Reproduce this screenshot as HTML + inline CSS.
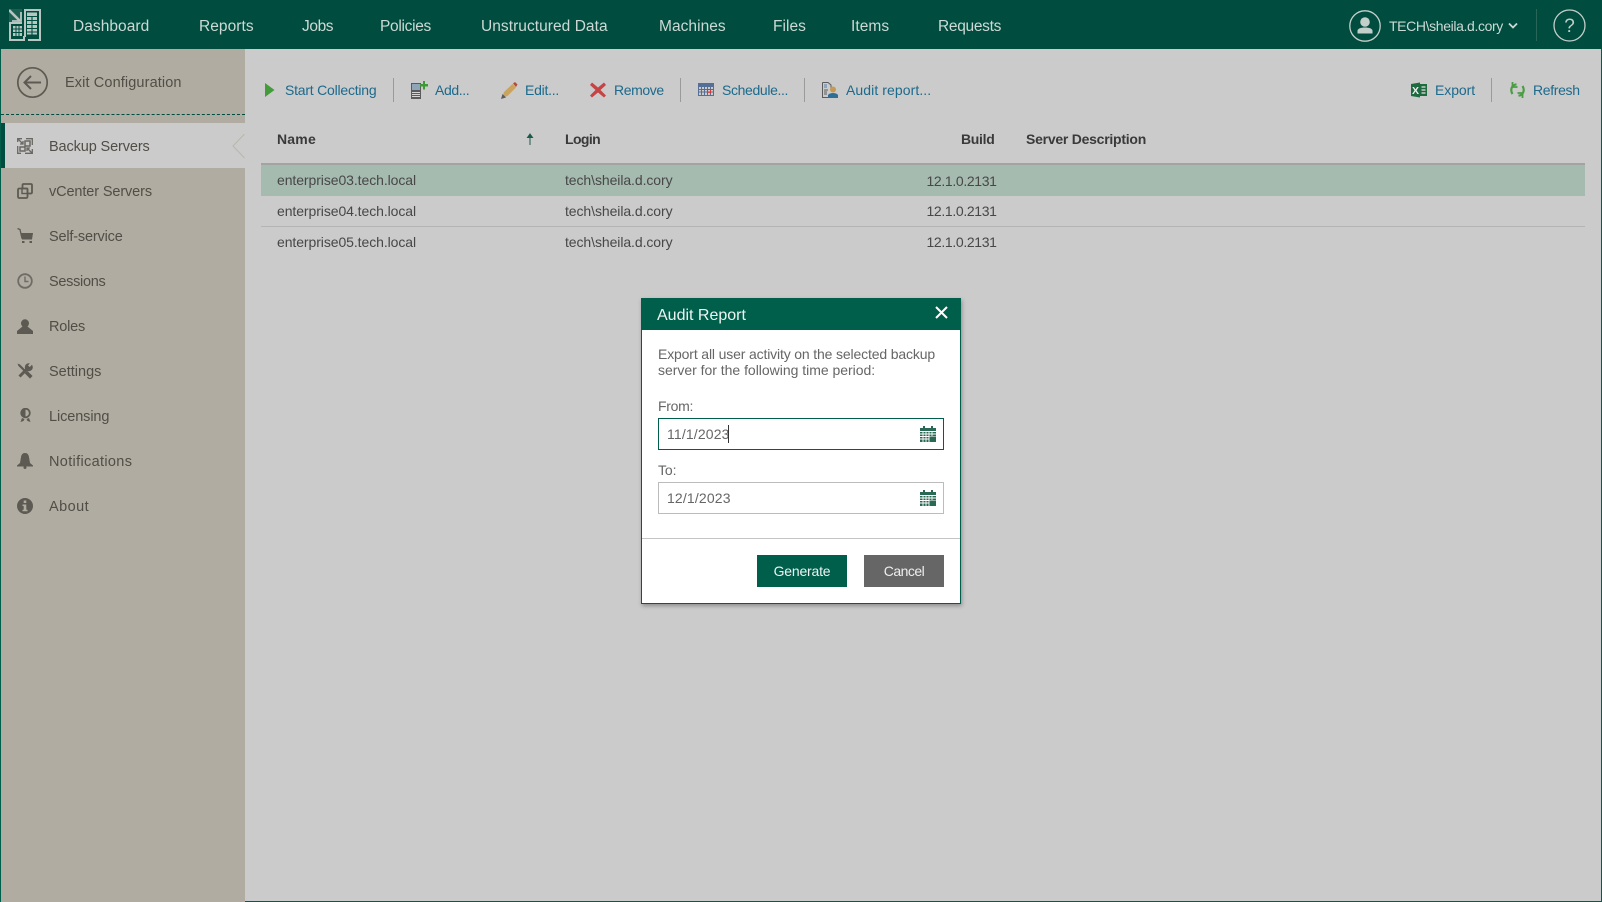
<!DOCTYPE html>
<html><head><meta charset="utf-8"><style>
html,body{margin:0;padding:0}
body{width:1602px;height:902px;position:relative;overflow:hidden;background:#cbcbcb;font-family:"Liberation Sans",sans-serif;font-size:14px;color:#444}
div,span,svg{position:absolute}
.t{white-space:nowrap;line-height:18px;height:18px}
.n{color:#ccd9d5;font-size:15.5px;top:18px;letter-spacing:.05px}
.s{color:#514e47;left:49px;font-size:14.5px;letter-spacing:-.15px}
.b{color:#1c6a8c;top:81px;font-size:14px;letter-spacing:-.3px}
.h{font-weight:bold;color:#3a3a3a;top:130px;font-size:14px;letter-spacing:-.25px}
.c{color:#474747;font-size:14px;letter-spacing:-.08px}
.r{letter-spacing:-.35px}
.v{width:1px;height:24px;top:78px;background:#9a9a9a}
.d{color:#666;font-size:14px;letter-spacing:-.15px}
</style></head><body>
<div style="left:0;top:0;width:1602px;height:49px;background:#004c3e"></div>
<div style="left:0;top:49px;width:1px;height:853px;background:#005f4b"></div>
<div style="left:0;top:901px;width:1602px;height:1px;background:#005f4b"></div>
<div style="left:1601px;top:49px;width:1px;height:853px;background:#005f4b"></div>

<svg style="left:9px;top:9px" width="32" height="32" viewBox="0 0 32 32">
<rect x="0" y="0" width="13" height="13" fill="#1d5f50"/><path d="M0 1L11 12" stroke="#b8c6c1" stroke-width="2.600" fill="none"/><path d="M12 3V12H3" stroke="#b8c6c1" stroke-width="1.800" fill="none"/><rect x="0" y="13" width="13" height="2" fill="#b8c6c1"/>
<path d="M1 15V31H15V27" stroke="#b8c6c1" stroke-width="2" fill="none"/>
<rect x="4" y="17" width="9" height="10" fill="#b8c6c1"/><path d="M4 20H13M4 23.500H13M7 17V27M10 17V27" stroke="#004c3e" stroke-width="1"/>
<path d="M16 28V1H31V31H19" stroke="#b8c6c1" stroke-width="2" fill="none"/>
<rect x="18" y="3.500" width="10" height="22" fill="#b8c6c1"/><path d="M18 7.500H28M18 11.500H28M18 15.500H28M18 19.500H28M18 23H28M23 7V25.500" stroke="#004c3e" stroke-width="1.100"/>
</svg>

<span class="t n" style="left:73px">Dashboard</span>
<span class="t n" style="left:199px">Reports</span>
<span class="t n" style="left:302px;letter-spacing:-.4px">Jobs</span>
<span class="t n" style="left:380px;letter-spacing:-.3px">Policies</span>
<span class="t n" style="left:481px">Unstructured Data</span>
<span class="t n" style="left:659px">Machines</span>
<span class="t n" style="left:773px">Files</span>
<span class="t n" style="left:851px">Items</span>
<span class="t n" style="left:938px;letter-spacing:-.3px">Requests</span>

<svg style="left:1349px;top:10px" width="32" height="32" viewBox="0 0 32 32"><circle cx="16" cy="16" r="15.2" fill="none" stroke="#c3cfcb" stroke-width="1.3"/><circle cx="16" cy="12" r="4.8" fill="#c3cfcb"/><path d="M8.5 23.5V20.5C9 18.5 12 17.5 16 17.5S23 18.5 23.5 20.5V23.5Z" fill="#c3cfcb"/></svg>
<span class="t" style="left:1389px;top:17px;color:#ccd9d5;font-size:14px;letter-spacing:-.37px">TECH\sheila.d.cory</span>
<svg style="left:1508px;top:22px" width="10" height="8" viewBox="0 0 10 8"><path d="M1 1.500L5 5.500L9 1.500" fill="none" stroke="#ccd9d5" stroke-width="1.800"/></svg>
<div style="left:1536px;top:9px;width:1px;height:32px;background:#2a6657"></div>
<svg style="left:1553px;top:9px" width="33" height="33" viewBox="0 0 33 33"><circle cx="16.500" cy="16.500" r="15.500" fill="none" stroke="#c3cfcb" stroke-width="1.300"/><text x="16.500" y="23" text-anchor="middle" font-family="Liberation Sans" font-size="19" fill="#c3cfcb">?</text></svg>

<div style="left:1px;top:49px;width:244px;height:853px;background:#b0aca1"></div>
<div style="left:1px;top:114px;width:244px;height:0;border-top:1px dashed #004c3e"></div>
<svg style="left:16px;top:66px" width="33" height="33" viewBox="0 0 33 33"><circle cx="16.500" cy="16.500" r="14.700" fill="none" stroke="#5d5a53" stroke-width="1.700"/><path d="M25 16.500H9M15 10L8.500 16.500L15 23" fill="none" stroke="#5d5a53" stroke-width="2"/></svg>
<span class="t s" style="left:65px;top:74px;letter-spacing:.12px">Exit Configuration</span>

<div style="left:1px;top:123px;width:4px;height:45px;background:#004c3e"></div>
<div style="left:5px;top:123px;width:240px;height:45px;background:#cbcbcb"></div>
<svg style="left:232px;top:134px" width="13" height="24" viewBox="0 0 13 24"><path d="M12.500 0L1 12L12.500 24" fill="none" stroke="#b9b6ac" stroke-width="1"/></svg>

<svg style="left:17px;top:138px" width="16" height="16" viewBox="0 0 16 16" fill="none" stroke="#6a6862" stroke-width="1.300"><path d="M5 .7H.7V4M.7 8V15.300H4M8 15.300H15.300V11M15.300 7V.7H9"/><path d="M1 1L6 6M3 6H6V3M10 10L15 15M10 13V10H13" stroke-width="1.300"/><rect x="8" y="3" width="5" height="5" stroke-width="1.500"/><rect x="3" y="9" width="5" height="4" stroke-width="1.500"/></svg>
<span class="t s" style="top:138px;letter-spacing:-.12px">Backup Servers</span>

<svg style="left:17px;top:183px" width="16" height="16" viewBox="0 0 16 16" fill="none" stroke="#5d5a53" stroke-width="1.800"><path d="M5.500 5V2.200C5.500 1.400 6 1 6.700 1H13.800C14.600 1 15 1.400 15 2.200V9.300C15 10 14.600 10.500 13.800 10.500H11"/><rect x="1" y="5.500" width="9.500" height="9.500" rx="1.200"/><rect x="5" y="5.500" width="5.500" height="5" stroke-width="1.400"/></svg>
<span class="t s" style="top:183px;letter-spacing:-.12px">vCenter Servers</span>

<svg style="left:17px;top:228px" width="16" height="16" viewBox="0 0 16 16"><path d="M.5 .5L3 1.500L5 10.500" fill="none" stroke="#5d5a53" stroke-width="1.300"/><path d="M3.800 5H16L15 11.500H5Z" fill="#5d5a53"/><rect x="5" y="13" width="2.500" height="2" fill="#5d5a53"/><rect x="12.500" y="13" width="2.500" height="2" fill="#5d5a53"/></svg>
<span class="t s" style="top:228px;letter-spacing:-.18px">Self-service</span>

<svg style="left:17px;top:273px" width="16" height="16" viewBox="0 0 16 16" fill="none" stroke="#6f6c65"><circle cx="8" cy="8" r="6.800" stroke-width="1.800"/><path d="M8 3.500V8.500H11.500" stroke-width="1.400"/></svg>
<span class="t s" style="top:273px;letter-spacing:-.3px">Sessions</span>

<svg style="left:17px;top:319px" width="16" height="16" viewBox="0 0 16 16" fill="#5d5a53"><circle cx="8" cy="4.300" r="4"/><path d="M5.500 7.500L0 12V15H16V12L10.500 7.500Z"/></svg>
<span class="t s" style="top:318px;letter-spacing:-.2px">Roles</span>

<svg style="left:17px;top:363px" width="16" height="16" viewBox="0 0 16 16"><path d="M2 2L8 8" stroke="#5d5a53" stroke-width="2.200"/><path d="M.5 .5L3 1.500L1.500 3Z" fill="#5d5a53"/><path d="M9 9L14.300 14.300" stroke="#5d5a53" stroke-width="3.600"/><path d="M2.500 13.500L10.500 5.500" stroke="#5d5a53" stroke-width="3"/><circle cx="11.800" cy="4.200" r="4" fill="#5d5a53"/><path d="M17 -.5L12.800 4L11 2.500L14.500 -1.500Z" fill="#b0aca1"/></svg>
<span class="t s" style="top:363px;letter-spacing:0">Settings</span>

<svg style="left:20px;top:408px" width="11" height="15" viewBox="0 0 11 15"><circle cx="5.500" cy="5" r="4.300" fill="none" stroke="#5d5a53" stroke-width="1.800"/><path d="M5.500 1V9A4 4 0 0 1 5.500 1Z" fill="#5d5a53"/><path d="M2 10L.5 14L3.500 13L4.500 11M9 10L10.500 14L7.500 13L6.500 11" fill="#5d5a53"/></svg>
<span class="t s" style="top:408px;letter-spacing:-.1px">Licensing</span>

<svg style="left:17px;top:453px" width="16" height="16" viewBox="0 0 16 16" fill="#5d5a53"><path d="M8 0C10.500 0 11.500 1.500 12 4L13 10L16 12.500V13.500H0V12.500L3 10L4 4C4.500 1.500 5.500 0 8 0Z"/><circle cx="8" cy="14.500" r="1.500"/></svg>
<span class="t s" style="top:453px;letter-spacing:.33px">Notifications</span>

<svg style="left:17px;top:498px" width="16" height="16" viewBox="0 0 16 16"><circle cx="8" cy="8" r="8" fill="#5d5a53"/><rect x="6.700" y="2.500" width="2.600" height="2.500" fill="#b0aca1"/><path d="M5.500 6.500H9.300V11.800H10.500V13.300H5.500V11.800H6.700V8H5.500Z" fill="#b0aca1"/></svg>
<span class="t s" style="top:498px;letter-spacing:.45px">About</span>

<svg style="left:265px;top:83px" width="10" height="14" viewBox="0 0 10 14"><path d="M0 0L9.500 7L0 14Z" fill="#439b39"/></svg>
<span class="t b" style="left:285px;letter-spacing:-.22px">Start Collecting</span>
<div class="v" style="left:393px"></div>
<svg style="left:411px;top:81px" width="17" height="18" viewBox="0 0 17 18"><rect x="0" y="2" width="10" height="16" fill="#5b5b5b"/><rect x="1" y="3" width="8" height="6" fill="#8ea6b8"/><path d="M1 11.500H9M1 13.500H9M1 15.500H9" stroke="#d5d5d5"/><path d="M9 3H12V0H14V3H17V5.500H14V8.500H12V5.500H9Z" fill="#3d9a35"/></svg>
<span class="t b" style="left:435px;letter-spacing:-.4px">Add...</span>
<svg style="left:501px;top:82px" width="17" height="17" viewBox="0 0 17 17"><path d="M3 10L11.500 2L15 5.500L6.500 14L1 16Z" fill="#c9a35f"/><path d="M12 1.500L14 0L16.500 2.500L15 5Z" fill="#b54a3a"/><path d="M0 17L1.500 12L5 15.500Z" fill="#5b5b5b"/></svg>
<span class="t b" style="left:525px;letter-spacing:-.25px">Edit...</span>
<svg style="left:590px;top:82px" width="16" height="16" viewBox="0 0 16 16"><path d="M2 .5L8 5.500L14 .5L16 3L10.500 8L16 13.500L14 15.500L8 10.500L2 15.500L0 13.500L5.500 8L0 3Z" fill="#c54444"/></svg>
<span class="t b" style="left:614px;letter-spacing:-.4px">Remove</span>
<div class="v" style="left:680px"></div>
<svg style="left:698px;top:83px" width="16" height="13" viewBox="0 0 16 13"><rect width="16" height="13" fill="#566f96"/><rect x="1" y="4" width="14" height="8" fill="#cbcbcb"/><path d="M1 6.500H15M1 9H15M3.500 4V12M6.500 4V12M9.500 4V12M12.500 4V12" stroke="#566f96" stroke-width="1"/><rect x="9.500" y="6.500" width="3" height="2.800" fill="none" stroke="#d33" stroke-width="1"/></svg>
<span class="t b" style="left:722px;letter-spacing:-.36px">Schedule...</span>
<div class="v" style="left:804px"></div>
<svg style="left:822px;top:82px" width="16" height="16" viewBox="0 0 16 16"><path d="M.5 .5H6L9 3V8M6 15.500H.5V.5" fill="none" stroke="#5b5b5b"/><rect x="2" y="2" width="3" height="4" fill="#8ea6b8"/><path d="M2 8H6M2 10H5M2 12H5" stroke="#5b5b5b"/><circle cx="11" cy="7.500" r="3" fill="#c49a55"/><path d="M6 16V13C7 11.500 9 11 11 11S15 11.500 16 13V16Z" fill="#2f6f96"/></svg>
<span class="t b" style="left:846px;letter-spacing:.08px">Audit report...</span>

<svg style="left:1411px;top:82px" width="16" height="16" viewBox="0 0 16 16"><path d="M9 .5V15.500L0 14V2Z" fill="#1d6b3f"/><rect x="9" y="2" width="7" height="12" fill="#1d6b3f"/><path d="M10.500 5H14.500M10.500 8H14.500M10.500 11H14.500" stroke="#cbcbcb" stroke-width="1.500"/><text x="4.500" y="12" text-anchor="middle" font-family="Liberation Sans" font-weight="bold" font-size="10.500" fill="#eee">X</text></svg>
<span class="t b" style="left:1435px;letter-spacing:-.07px">Export</span>
<div class="v" style="left:1491px"></div>
<svg style="left:1510px;top:82px" width="15" height="16" viewBox="0 0 15 16" fill="none" stroke="#4a9d43"><path d="M2.500 12C0 8 1.500 3 6.500 2.300" stroke-width="2.200"/><path d="M12.500 4C15 8 13.500 13 8.500 13.700" stroke-width="2.200"/><path d="M2.500 0V5H7.500" stroke-width="1.800"/><path d="M12.500 16V11H7.500" stroke-width="1.800"/></svg>
<span class="t b" style="left:1533px;letter-spacing:-.34px">Refresh</span>

<span class="t h" style="left:277px;letter-spacing:.2px">Name</span>
<svg style="left:526px;top:133px" width="8" height="12" viewBox="0 0 8 12"><path d="M4 12V2M1.500 4.500L4 1L6.500 4.500Z" stroke="#1a5a48" stroke-width="1" fill="#1a5a48"/></svg>
<span class="t h" style="left:565px;letter-spacing:-.6px">Login</span>
<span class="t h" style="left:961px;letter-spacing:-.3px">Build</span>
<span class="t h" style="left:1026px">Server Description</span>

<div style="left:261px;top:163px;width:1324px;height:2px;background:#a3a3a3"></div>
<div style="left:261px;top:165px;width:1324px;height:31px;background:#a6bbb0"></div>
<div style="left:261px;top:226px;width:1324px;height:1px;background:#b5b5b5"></div>
<span class="t c" style="left:277px;top:171px">enterprise03.tech.local</span>
<span class="t c" style="left:565px;top:171px">tech\sheila.d.cory</span>
<span class="t c r" style="left:926.500px;top:172px">12.1.0.2131</span>
<span class="t c" style="left:277px;top:202px">enterprise04.tech.local</span>
<span class="t c" style="left:565px;top:202px">tech\sheila.d.cory</span>
<span class="t c r" style="left:926.500px;top:202px">12.1.0.2131</span>
<span class="t c" style="left:277px;top:233px">enterprise05.tech.local</span>
<span class="t c" style="left:565px;top:233px">tech\sheila.d.cory</span>
<span class="t c r" style="left:926.500px;top:233px">12.1.0.2131</span>

<div style="left:641px;top:298px;width:318px;height:304px;background:#fff;border:1px solid #005f4b;box-shadow:1px 2px 4px rgba(0,0,0,.3)"></div>
<div style="left:641px;top:298px;width:320px;height:32px;background:#005f4b"></div>
<span class="t" style="left:657px;top:307px;color:#eef4f2;font-size:16px">Audit Report</span>
<svg style="left:935px;top:306px" width="13" height="13" viewBox="0 0 13 13"><path d="M1 1L12 12M12 1L1 12" stroke="#fff" stroke-width="2"/></svg>
<span class="t d" style="left:658px;top:345px">Export all user activity on the selected backup</span>
<span class="t d" style="left:658px;top:361px;letter-spacing:-.02px">server for the following time period:</span>
<span class="t d" style="left:658px;top:397px;letter-spacing:-.3px">From:</span>
<div style="left:658px;top:418px;width:284px;height:30px;border:1px solid #005f4b;background:#fff"></div>
<span class="t d" style="left:667px;top:425px;letter-spacing:.15px">11/1/2023</span>
<div style="left:728px;top:425px;width:1px;height:18px;background:#333"></div>
<svg style="left:920px;top:426px" width="16" height="16" viewBox="0 0 16 16"><path d="M3 0H5V3H3ZM11 0H13V3H11Z" fill="#2a6a55"/><rect y="2" width="16" height="14" fill="#2a6a55"/><path d="M0 5.500H16M0 8H16M0 10.500H16M0 13H16M3 5V16M6 5V16M9 5V16M12 5V16" stroke="#fff" stroke-width=".9"/><rect x="9.500" y="10.500" width="6.500" height="5.500" fill="#2a6a55"/></svg>
<span class="t d" style="left:658px;top:461px;letter-spacing:-.1px">To:</span>
<div style="left:658px;top:482px;width:284px;height:30px;border:1px solid #bcbcbc;background:#fff"></div>
<span class="t d" style="left:667px;top:489px;letter-spacing:.15px">12/1/2023</span>
<svg style="left:920px;top:490px" width="16" height="16" viewBox="0 0 16 16"><path d="M3 0H5V3H3ZM11 0H13V3H11Z" fill="#2a6a55"/><rect y="2" width="16" height="14" fill="#2a6a55"/><path d="M0 5.500H16M0 8H16M0 10.500H16M0 13H16M3 5V16M6 5V16M9 5V16M12 5V16" stroke="#fff" stroke-width=".9"/><rect x="9.500" y="10.500" width="6.500" height="5.500" fill="#2a6a55"/></svg>
<div style="left:642px;top:538px;width:318px;height:1px;background:#c4c4c4"></div>
<div style="left:757px;top:555px;width:90px;height:32px;background:#005f4b;color:#eef4f2;text-align:center;line-height:32px;font-size:14px;letter-spacing:-.2px">Generate</div>
<div style="left:864px;top:555px;width:80px;height:32px;background:#666;color:#eee;text-align:center;line-height:32px;font-size:14px;letter-spacing:-.5px">Cancel</div>
</body></html>
